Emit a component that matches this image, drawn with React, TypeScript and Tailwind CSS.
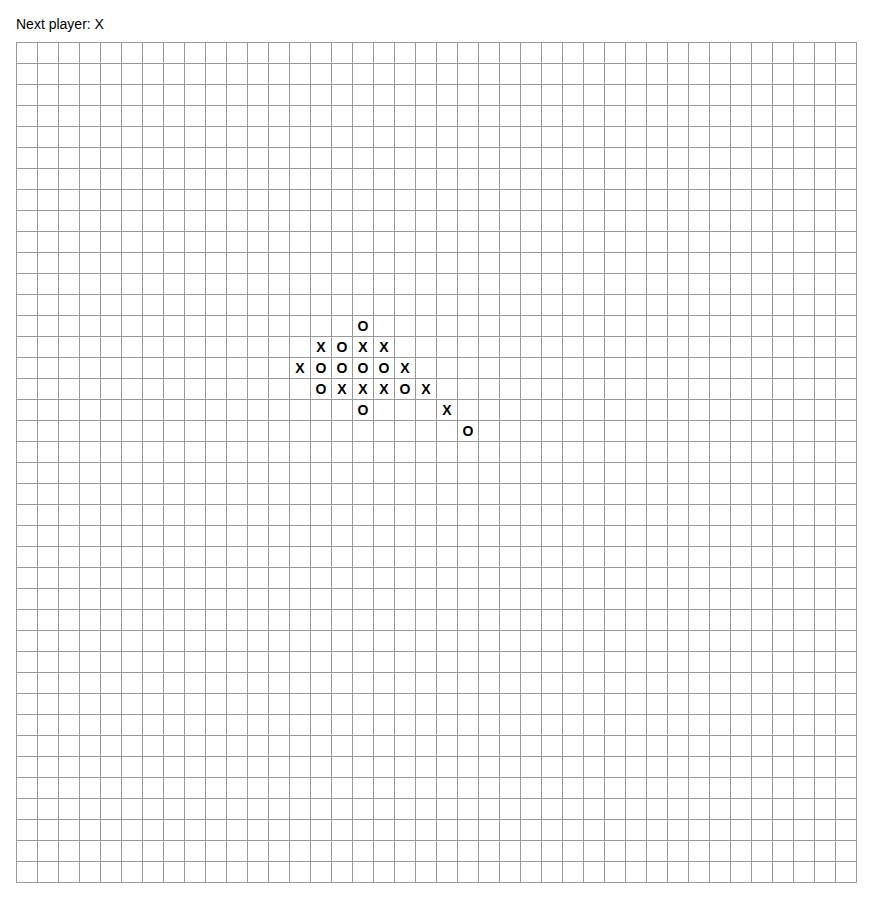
import React, { useState } from "react";

const SIZE = 40;

// стартовая позиция на доске: [строка, столбец, знак]
const MOVES: [number, number, string][] = [
  [13, 16, "O"],
  [14, 14, "X"],
  [14, 15, "O"],
  [14, 16, "X"],
  [14, 17, "X"],
  [15, 13, "X"],
  [15, 14, "O"],
  [15, 15, "O"],
  [15, 16, "O"],
  [15, 17, "O"],
  [15, 18, "X"],
  [16, 14, "O"],
  [16, 15, "X"],
  [16, 16, "X"],
  [16, 17, "X"],
  [16, 18, "O"],
  [16, 19, "X"],
  [17, 16, "O"],
  [17, 20, "X"],
  [18, 21, "O"],
];

const initialBoard = () => {
  const board: (string | null)[] = Array(SIZE * SIZE).fill(null);
  MOVES.forEach(([r, c, v]) => (board[r * SIZE + c] = v));
  return board;
};

const App = () => {
  const [board, setBoard] = useState<(string | null)[]>(initialBoard);
  const [xNext, setXNext] = useState<boolean>(true);

  const handleClick = (i: number) => {
    if (board[i]) return;
    const next = board.slice();
    next[i] = xNext ? "X" : "O";
    setBoard(next);
    setXNext(!xNext);
  };

  return (
    <div className="p-4 font-['Liberation_Sans',Arial,sans-serif] text-sm text-black">
      {/* Статус */}
      <div className="mb-[10px] leading-4">Next player: {xNext ? "X" : "O"}</div>

      {/* Доска */}
      <div className="grid w-fit grid-cols-[repeat(40,21px)] border-l border-t border-[#999]">
        {board.map((v, i) => (
          <button
            key={i}
            className="flex h-[21px] w-[21px] items-center justify-center border-b border-r border-[#999] bg-white p-0 text-sm font-bold leading-none"
            onClick={() => handleClick(i)}
          >
            {v}
          </button>
        ))}
      </div>
    </div>
  );
};

export default App;
